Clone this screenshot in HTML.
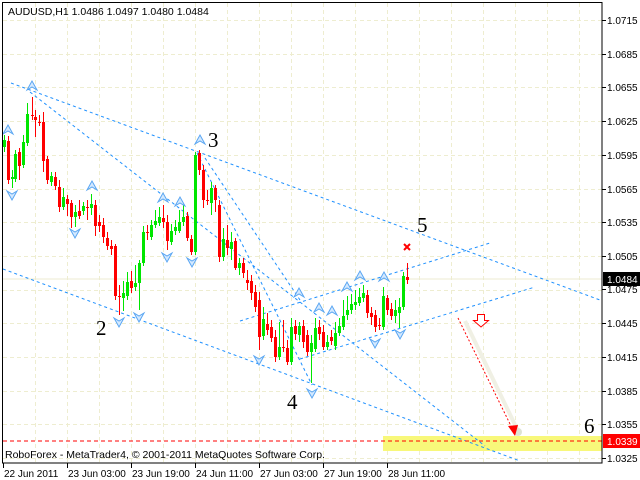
<!DOCTYPE html>
<html><head><meta charset="utf-8"><style>
html,body{margin:0;padding:0;background:#fff;width:640px;height:480px;overflow:hidden}
svg{display:block}
text{font-family:"Liberation Sans",sans-serif}
</style></head><body>
<svg id="s" width="640" height="480" xmlns="http://www.w3.org/2000/svg">
<rect width="640" height="480" fill="#fff"/>
<g id="grid"></g>
<rect x="383" y="436" width="219" height="15" fill="#f8f87a"/>
<line x1="3" y1="279" x2="602" y2="279" stroke="#ecebd2" stroke-width="1"/>
<g id="lines" stroke="#1e90ff" stroke-width="1" stroke-dasharray="3,3" fill="none">
<line x1="11" y1="83" x2="600" y2="300"/>
<line x1="30" y1="92" x2="485" y2="446"/>
<line x1="3" y1="269" x2="520" y2="461"/>
<line x1="197" y1="153" x2="312" y2="385"/>
<line x1="205" y1="158" x2="300" y2="300"/>
<line x1="240" y1="321" x2="490" y2="243"/>
<line x1="300" y1="359" x2="535" y2="287"/>
</g>
<line x1="3" y1="441" x2="602" y2="441" stroke="#ff0000" stroke-width="1" stroke-dasharray="4,3"/>
<g id="candles"></g>
<g id="fr"></g>
<line x1="465" y1="321" x2="518" y2="431" stroke="#f0f0e4" stroke-width="4"/>
<circle cx="518" cy="432" r="4" fill="#dde3d4"/>
<line x1="458" y1="318" x2="511" y2="426" stroke="#ff0000" stroke-width="1" stroke-dasharray="2,2"/>
<polygon points="508,426 518,425 515,436" fill="#ff0000"/>
<path d="M477.5,314.5 h7 v6 h4 l-7.5,6.5 l-7.5,-6.5 h4 z" fill="#fff" stroke="#ff0000" stroke-width="1"/>
<path d="M404,244 l6,6 M410,244 l-6,6" stroke="#ff0000" stroke-width="2"/>
<g font-size="21" fill="#000">
<text x="208" y="147" style="font-family:'Liberation Serif',serif">3</text>
<text x="417" y="232" style="font-family:'Liberation Serif',serif">5</text>
<text x="96" y="335" style="font-family:'Liberation Serif',serif">2</text>
<text x="287" y="409" style="font-family:'Liberation Serif',serif">4</text>
<text x="584" y="433" style="font-family:'Liberation Serif',serif">6</text>
</g>
<text x="8" y="15" font-size="10.5" fill="#000">AUDUSD,H1  1.0486 1.0497 1.0480 1.0484</text>
<text x="5" y="458" font-size="10.5" fill="#000">RoboForex - MetaTrader4, © 2001-2011 MetaQuotes Software Corp.</text>
<g id="axis"></g>
</svg>
<script>
var NS="http://www.w3.org/2000/svg";
function el(p,t,a,txt){var e=document.createElementNS(NS,t);for(var k in a)e.setAttribute(k,a[k]);if(txt!=null)e.textContent=txt;p.appendChild(e);return e;}
var g=document.getElementById('grid');
for(var k=0;k<14;k++){var y=Math.round(20+33.7*k)+0.5;el(g,'line',{x1:3,y1:y,x2:602,y2:y,stroke:'#eeedd0','stroke-dasharray':'4,3'});}
for(var x=35;x<602;x+=32){el(g,'line',{x1:x+0.5,y1:3,x2:x+0.5,y2:463,stroke:'#eeedd0','stroke-dasharray':'4,3'});}
var C=[[4,147,140,135,152],[8,141,180,136,184],[12,179,177,170,188],[15,179,154,150,182],[19,152,166,148,180],[23,165,142,135,168],[27,143,114,103,146],[32,115,116,97,120],[35,117,120,110,137],[39,122,123,115,126],[43,122,161,112,172],[47,159,180,156,184],[51,182,176,172,186],[55,177,186,172,190],[59,187,207,180,212],[63,207,197,188,210],[67,199,204,195,216],[71,203,217,200,228],[75,217,212,205,227],[79,211,216,200,219],[83,211,206,202,215],[87,207,208,200,220],[91,208,204,194,215],[95,205,226,200,236],[99,222,226,215,232],[103,225,237,218,243],[107,238,246,232,250],[111,246,249,240,255],[115,246,296,244,300],[119,296,297,285,315],[123,298,293,281,311],[127,296,282,272,300],[131,281,288,271,293],[135,287,283,265,291],[139,283,263,260,310],[143,263,232,226,266],[147,232,233,225,240],[151,237,225,220,240],[155,225,221,210,228],[159,223,217,207,226],[163,218,222,205,228],[167,222,241,215,250],[171,242,231,224,245],[175,231,227,220,235],[179,231,222,210,233],[183,222,217,205,226],[187,216,238,212,241],[191,239,252,235,255],[195,252,155,152,255],[199,153,170,150,175],[203,170,200,165,208],[207,200,201,190,205],[211,203,188,182,215],[215,188,200,185,212],[219,205,257,200,262],[223,257,239,228,261],[227,240,248,225,255],[231,249,242,232,260],[235,241,268,238,270],[239,268,263,258,275],[243,263,273,258,278],[247,280,283,270,290],[251,281,293,275,300],[255,292,307,285,312],[259,300,337,292,350],[263,336,319,307,340],[267,324,330,313,335],[271,327,338,320,342],[275,337,357,330,362],[279,357,347,322,360],[283,347,348,320,352],[287,348,362,340,365],[291,362,327,318,365],[295,326,334,320,340],[299,335,326,322,342],[303,326,342,320,348],[307,335,352,330,356],[311,352,343,335,383],[315,349,328,318,352],[319,327,334,320,340],[323,332,347,325,350],[327,347,342,335,350],[331,337,341,330,345],[335,346,333,322,350],[339,333,326,318,336],[343,327,316,300,330],[347,315,310,296,320],[351,310,304,294,314],[355,305,302,290,310],[359,303,297,288,306],[363,298,293,285,302],[367,295,313,290,318],[371,313,317,307,325],[375,315,327,310,332],[379,325,326,318,330],[383,327,296,287,330],[387,298,310,295,315],[391,309,316,303,320],[395,316,310,300,323],[399,313,307,298,328],[403,307,276,272,310],[407,277,280,263,284]];
var cg=document.getElementById('candles');
C.forEach(function(c){var x=c[0],o=c[1],cl=c[2],h=c[3],l=c[4];var col=cl<o?'#00e600':'#ff0000';
el(cg,'rect',{x:x,y:h,width:1,height:l-h,fill:col});
var t=Math.min(o,cl),b=Math.max(o,cl);if(b-t<1)b=t+1;
el(cg,'rect',{x:x-1,y:t,width:3,height:b-t,fill:col});});
var fr=document.getElementById('fr');
function up(x,y){el(fr,'path',{d:'M'+(x-5)+','+(y+4)+' L'+x+','+(y-5)+' L'+(x+5)+','+(y+4)+' L'+x+','+(y+1)+' Z',fill:'#d4e9ff',stroke:'#5aa6f2','stroke-width':1});}
function dn(x,y){el(fr,'path',{d:'M'+(x-5)+','+(y-4)+' L'+x+','+(y+5)+' L'+(x+5)+','+(y-4)+' L'+x+','+(y-1)+' Z',fill:'#d4e9ff',stroke:'#5aa6f2','stroke-width':1});}
[[32,86],[8,130],[92,186],[163,198],[180,202],[200,140],[299,293],[319,308],[332,311],[347,287],[360,276],[384,277]].forEach(function(p){up(p[0],p[1]);});
[[12,195],[75,233],[119,322],[139,317],[167,257],[192,262],[259,360],[312,393],[375,343],[400,334]].forEach(function(p){dn(p[0],p[1]);});
var ax=document.getElementById('axis');
el(ax,'rect',{x:2.5,y:2.5,width:599.5,height:460.5,fill:'none',stroke:'#000','stroke-width':1});
var labs=['1.0715','1.0685','1.0655','1.0625','1.0595','1.0565','1.0535','1.0505','1.0475','1.0445','1.0415','1.0385','1.0355','1.0325'];
labs.forEach(function(s,k){var y=Math.round(20+33.7*k);if(s=='1.0475')y=289;
el(ax,'line',{x1:602,y1:y+0.5,x2:606,y2:y+0.5,stroke:'#000'});
el(ax,'text',{x:607,y:y+4,'font-size':10,fill:'#000'},s);});
el(ax,'rect',{x:603,y:272,width:37,height:14,fill:'#000'});
el(ax,'text',{x:607,y:283,'font-size':10,fill:'#fff'},'1.0484');
el(ax,'rect',{x:603,y:434,width:37,height:14,fill:'#ff0000'});
el(ax,'text',{x:607,y:445,'font-size':10,fill:'#fff'},'1.0339');
var tl=[[3,'22 Jun 2011'],[67,'23 Jun 03:00'],[131,'23 Jun 19:00'],[195,'24 Jun 11:00'],[259,'27 Jun 03:00'],[323,'27 Jun 19:00'],[387,'28 Jun 11:00']];
tl.forEach(function(t){el(ax,'line',{x1:t[0]+0.5,y1:463,x2:t[0]+0.5,y2:468,stroke:'#000'});el(ax,'text',{x:t[0]+1,y:477,'font-size':10,fill:'#000'},t[1]);});
</script>
</body></html>
